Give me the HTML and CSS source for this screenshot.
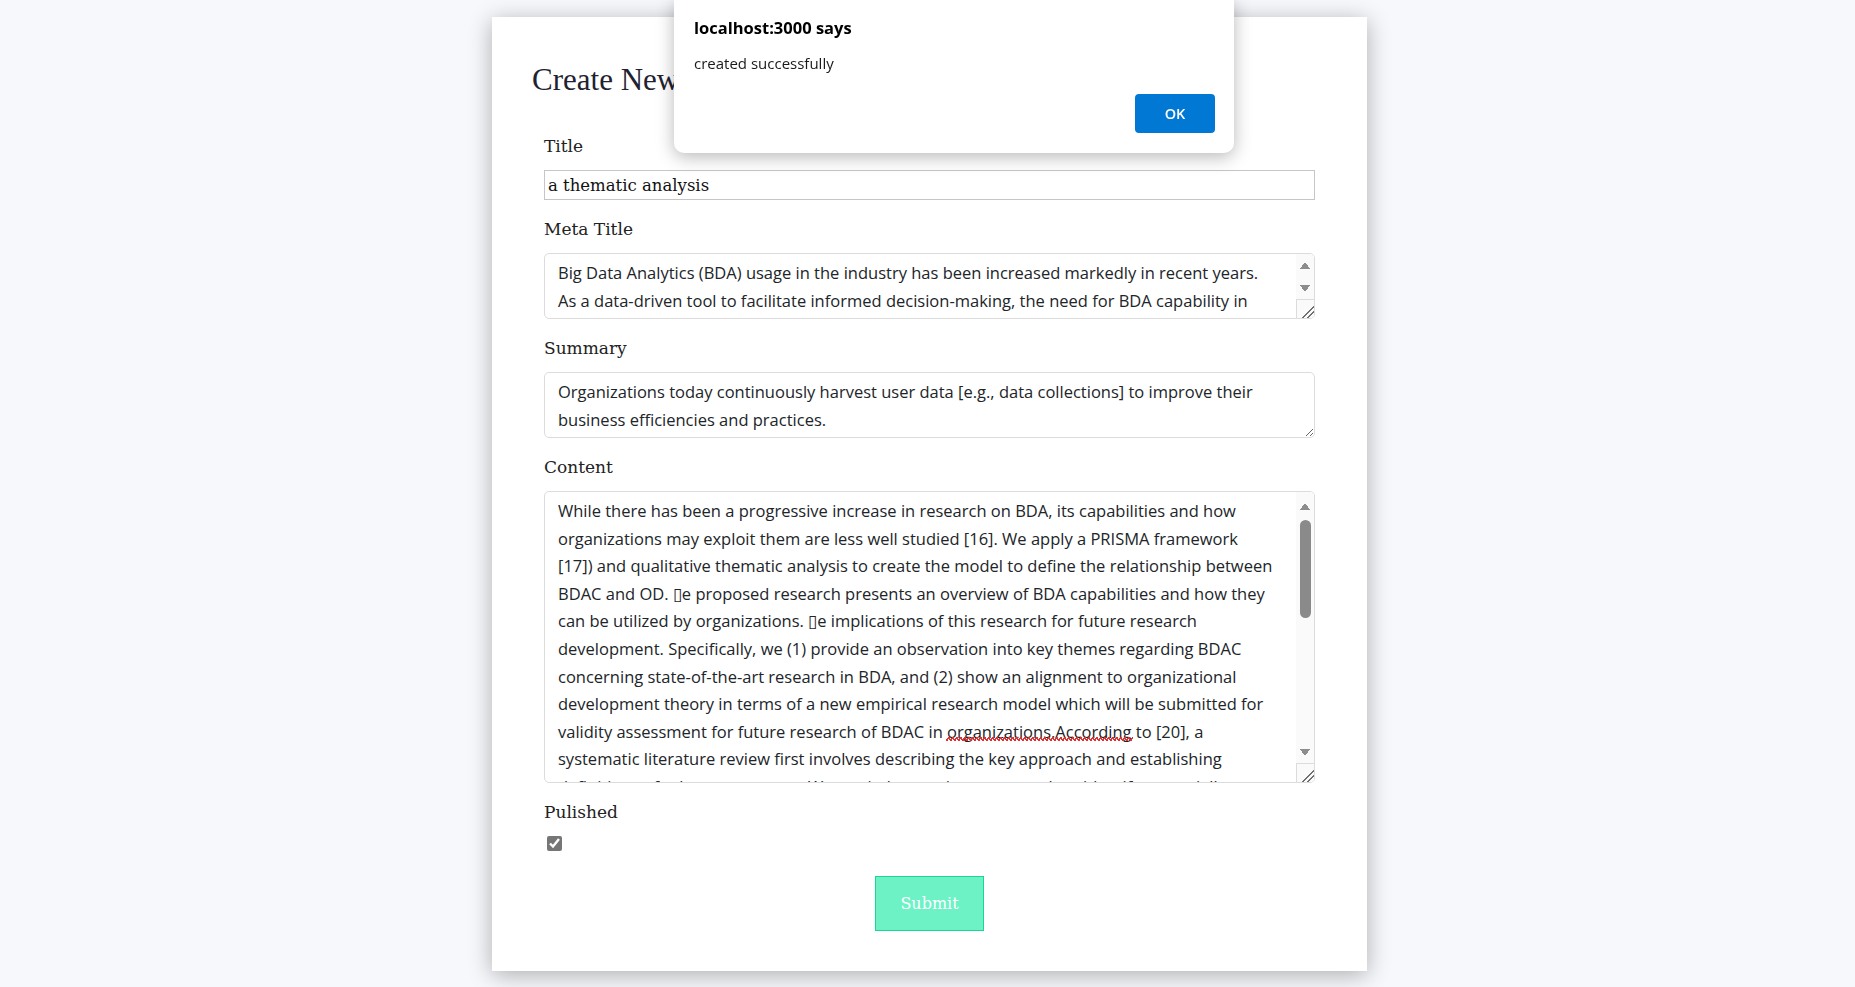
FILE: index.html
```html
<!DOCTYPE html>
<html lang="en">
<head>
<meta charset="utf-8">
<title>Create New Blog</title>
<link rel="stylesheet" href="styles.css">
</head>
<body>
<main class="card">
  <h1 class="heading">Create New Blog</h1>
  <form class="form">
    <div class="field">
      <label class="label" for="title">Title</label>
      <input class="input" id="title" type="text" value="a thematic analysis">
    </div>
    <div class="field">
      <label class="label" for="meta">Meta Title</label>
      <div class="area-wrap">
        <textarea class="area area-meta" id="meta" wrap="off">Big Data Analytics (BDA) usage in the industry has been increased markedly in recent years.
As a data-driven tool to facilitate informed decision-making, the need for BDA capability in
organizations is recognized, but few studies have communicated an understanding of BDA
capabilities in a way that can enhance our theoretical knowledge of using BDA.</textarea>
        <div class="vscroll vscroll-meta" aria-hidden="true">
          <span class="vs-btn vs-up"></span>
          <span class="vs-track"></span>
          <span class="vs-btn vs-down"></span>
          <span class="vs-corner"></span>
        </div>
      </div>
    </div>
    <div class="field">
      <label class="label" for="summary">Summary</label>
      <textarea class="area area-summary" id="summary" wrap="off">Organizations today continuously harvest user data [e.g., data collections] to improve their
business efficiencies and practices.</textarea>
    </div>
    <div class="field">
      <label class="label" for="content">Content</label>
      <div class="area-wrap">
        <textarea class="area area-content" id="content" wrap="off">While there has been a progressive increase in research on BDA, its capabilities and how
organizations may exploit them are less well studied [16]. We apply a PRISMA framework
[17]) and qualitative thematic analysis to create the model to define the relationship between
BDAC and OD. &#x25AF;e proposed research presents an overview of BDA capabilities and how they
can be utilized by organizations. &#x25AF;e implications of this research for future research
development. Specifically, we (1) provide an observation into key themes regarding BDAC
concerning state-of-the-art research in BDA, and (2) show an alignment to organizational
development theory in terms of a new empirical research model which will be submitted for
validity assessment for future research of BDAC in organizations.According to [20], a
systematic literature review first involves describing the key approach and establishing
definitions of relevant concepts. We carried out a rigorous search to identify potentially
relevant studies published in journals and conference proceedings. &#x25AF;e search was
performed on the main scientific databases using a combination of keywords related to
big data, analytics capabilities and organizational development. Duplicates were removed
and the remaining studies were screened by title and abstract, followed by a full-text
review against the inclusion and exclusion criteria. &#x25AF;e selected studies were then
coded and analysed thematically in order to identify recurring concepts, relationships and
gaps in the existing literature. &#x25AF;e resulting themes were grouped into categories that
describe the technological, organizational and human dimensions of BDA capability, and
their influence on organizational development outcomes such as agility, innovation and
performance. Finally, the themes were synthesised into a conceptual research model that
links BDAC to OD and proposes a set of hypotheses to be tested in future empirical work.
&#x25AF;e remainder of this paper is organized as follows: section two presents the background,
section three describes the methodology and section four discusses the findings.</textarea>
        <span class="squiggle" aria-hidden="true"></span>
        <div class="vscroll vscroll-content" aria-hidden="true">
          <span class="vs-btn vs-up"></span>
          <span class="vs-track"><span class="vs-thumb"></span></span>
          <span class="vs-btn vs-down"></span>
          <span class="vs-corner"></span>
        </div>
      </div>
    </div>
    <div class="field field-check">
      <label class="label" for="published">Pulished</label>
      <input class="check" id="published" type="checkbox" checked>
    </div>
    <div class="actions">
      <button class="submit" type="button">Submit</button>
    </div>
  </form>
</main>

<div class="dialog" role="alertdialog">
  <div class="dialog-title">localhost:3000 says</div>
  <div class="dialog-msg">created successfully</div>
  <div class="dialog-actions">
    <button class="dialog-ok" type="button">OK</button>
  </div>
</div>
</body>
</html>
```
FILE: styles.css
```css
* { box-sizing: border-box; }

html, body {
  margin: 0;
  padding: 0;
}

body {
  background: #f7f8fb;
  font-family: "DejaVu Serif", serif;
  color: #222;
  padding-top: 17px;
  height: 987px;
  overflow: hidden;
}

.card {
  width: 875px;
  margin: 0 auto;
  background: #fff;
  padding: 45px 40px 40px;
  box-shadow: 0 4px 22px rgba(0, 0, 0, 0.3);
  transform: translateX(2px);
}

.heading {
  margin: 0;
  font-family: "Liberation Serif", serif;
  font-weight: 400;
  font-size: 31px;
  line-height: 36px;
  color: #1f2230;
}

.form {
  margin-top: 36px;
  padding: 0 12px;
}

.field {
  display: flex;
  flex-direction: column;
  align-items: stretch;
  gap: 12px;
  margin-bottom: 17px;
}

.label {
  font-family: "DejaVu Serif", serif;
  font-size: 17px;
  line-height: 24px;
  color: #222;
}

.input {
  height: 30px;
  border: 1px solid #c6c6c6;
  border-radius: 0;
  padding: 1px 3px;
  font-family: "DejaVu Serif", serif;
  font-size: 16.5px;
  color: #111;
  background: #fff;
  outline: none;
}

.area-wrap {
  position: relative;
}

.area {
  display: block;
  width: 100%;
  border: 1px solid #dcdcdc;
  border-radius: 5px;
  padding: 5px 24px 4px 13px;
  font-family: "Open Sans", sans-serif;
  font-size: 16.5px;
  line-height: 27.6px;
  color: #212529;
  background: #fff;
  resize: vertical;
  overflow: hidden;
  white-space: pre;
  outline: none;
}

.area-meta { height: 66px; }
.area-summary { height: 66px; }
.area-content { height: 292px; }

/* spell-check underline drawn over "organizations.According" */
.squiggle {
  position: absolute;
  left: 402px;
  top: 246px;
  width: 187px;
  height: 4px;
  pointer-events: none;
  background-image:
    linear-gradient(135deg, transparent 30%, #e0322e 30% 55%, transparent 55%),
    linear-gradient(45deg, transparent 30%, #e0322e 30% 55%, transparent 55%);
  background-size: 4px 4px;
  background-position: 0 0, 2px 0;
  background-repeat: repeat-x;
}

/* drawn scrollbar, lying over the textarea's right edge */
.vscroll {
  position: absolute;
  top: 1px;
  right: 1px;
  bottom: 1px;
  width: 18px;
  display: flex;
  flex-direction: column;
  background: #fafafa;
  border-radius: 0 4px 4px 0;
  pointer-events: none;
}

.vs-btn {
  flex: none;
  height: 22px;
  background-repeat: no-repeat;
  background-size: 10px 7px;
  background-position: center;
}

.vs-up {
  background-image: conic-gradient(from 144deg at 50% 0, #8d8d8d 72deg, transparent 0);
}

.vs-down {
  background-image: conic-gradient(from -36deg at 50% 100%, #8d8d8d 72deg, transparent 0);
}

.vs-track {
  flex: 1;
  display: flex;
  flex-direction: column;
  align-items: center;
}

.vs-thumb {
  width: 11px;
  height: 98px;
  background: #8a8a8a;
  border-radius: 6px;
}

.vs-corner {
  flex: none;
  height: 19px;
  border-top: 1px solid #dcdcdc;
  border-left: 1px solid #dcdcdc;
  background-color: #fafafa;
  background-image: linear-gradient(135deg, transparent 64%, #6f6f6f 64% 69%, transparent 69% 78%, #6f6f6f 78% 83%, transparent 83%);
  border-radius: 0 0 4px 0;
}

.vscroll-content .vs-up {
  height: 28px;
}
.vscroll-content .vs-down {
  height: 22px;
}

.field-check {
  margin-bottom: 0;
  gap: 12px;
}

.check {
  margin: 0 0 0 3px;
  width: 15px;
  height: 15px;
  accent-color: #767676;
}

.actions {
  display: flex;
  justify-content: center;
  margin-top: 25px;
}

.submit {
  width: 109px;
  height: 55px;
  background: #6cf2c5;
  border: 1px solid #19d693;
  color: #fff;
  font-family: "DejaVu Serif", serif;
  font-size: 16px;
  padding: 0;
  cursor: pointer;
}

.dialog {
  position: fixed;
  top: 0;
  left: 674px;
  width: 560px;
  height: 153px;
  background: #fff;
  border-radius: 0 0 10px 10px;
  box-shadow: 0 4px 18px rgba(0, 0, 0, 0.28);
  padding: 17px 19px 20px 20px;
  font-family: "Open Sans", sans-serif;
  display: flex;
  flex-direction: column;
}

.dialog-title {
  font-weight: 700;
  font-size: 16.5px;
  line-height: 22px;
  color: #000;
}

.dialog-msg {
  margin-top: 14px;
  font-size: 15px;
  line-height: 20px;
  color: #1a1a1a;
}

.dialog-actions {
  display: flex;
  justify-content: flex-end;
  margin-top: auto;
}

.dialog-ok {
  width: 80px;
  height: 39px;
  border: none;
  border-radius: 4px;
  background: #0078d4;
  color: #fff;
  font-family: "Open Sans", sans-serif;
  font-size: 14.5px;
  font-weight: 600;
}
```
